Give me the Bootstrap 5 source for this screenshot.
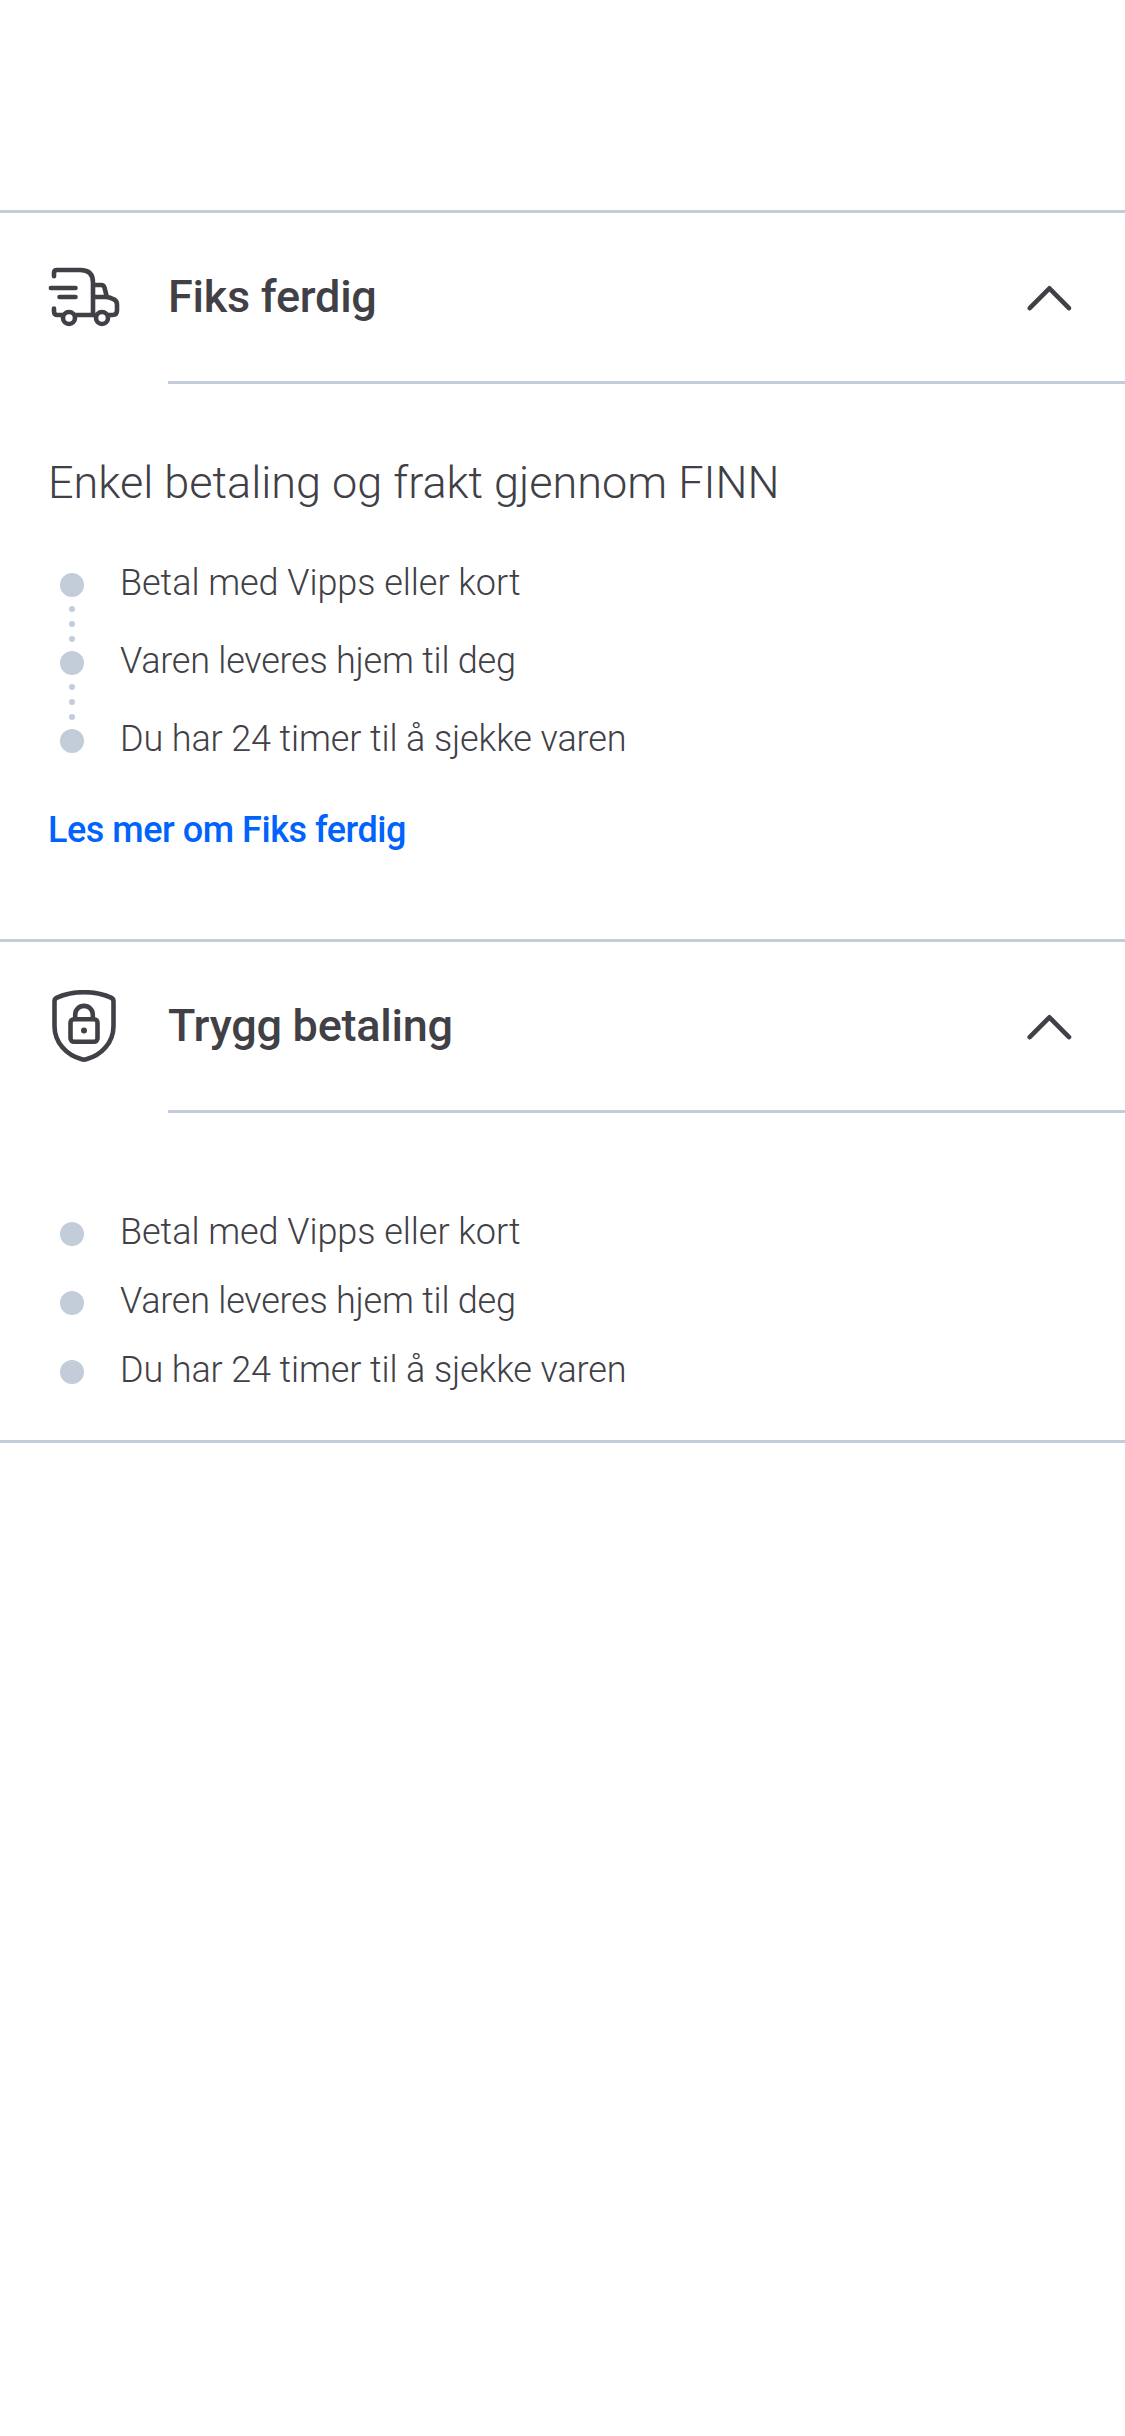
<!DOCTYPE html>
<html lang="nb">
<head>
<meta charset="utf-8">
<meta name="viewport" content="width=device-width, initial-scale=1">
<title>Fiks ferdig</title>
<link href="https://cdn.jsdelivr.net/npm/bootstrap@5.3.0/dist/css/bootstrap.min.css" rel="stylesheet">
<style>
  :root { --ink: #404046; --rule: #c3ccd9; --action: #0063fb; }
  body { font-family: Roboto, "Liberation Sans", sans-serif; font-weight: 300; color: var(--ink); padding-top: 210px; }
  .panels { border-top: 3px solid var(--rule); }
  .panel { border-bottom: 3px solid var(--rule); }
  .panel-head { height: 168px; padding: 0 52px 0 48px; color: var(--ink); text-align: left; }
  .panel-icon { width: 72px; height: 72px; margin-right: 48px; }
  .panel-title { font-size: 45px; font-weight: 500; line-height: 54px; letter-spacing: -.25px; }
  .panel-rule { height: 3px; margin-left: 168px; background: var(--rule); }
  .panel-icon, .chevron { fill: none; stroke: var(--ink); stroke-width: 4.6; stroke-linecap: round; stroke-linejoin: round; }
  .body-steps { padding: 72px 48px 88px; }
  .body-bullets { padding: 109px 48px 56px; }
  .intro { font-size: 45px; font-weight: 300; line-height: 54px; margin-bottom: 63px; }
  .steps { font-size: 36px; line-height: 20px; letter-spacing: -.12px; }
  .steps li { height: 69px; padding-left: 12px; gap: 36px; }
  .steps.linked li { height: 78px; }
  .steps li:last-child { height: 24px; }
  .steps li:first-child { letter-spacing: -.05px; }
  .steps li:nth-child(2) { letter-spacing: -.23px; }
  .bullet { width: 24px; fill: var(--rule); }
  .more { font-size: 36px; font-weight: 500; line-height: 42px; letter-spacing: -.47px; color: var(--action); margin-top: 56px; }
</style>
</head>
<body>
<main class="panels">
  <section class="panel">
    <button type="button" class="panel-head w-100 d-flex align-items-center bg-transparent border-0" aria-expanded="true">
      <svg class="panel-icon flex-shrink-0" viewBox="0 0 72 72" aria-hidden="true">
        <path d="M6 15.2V12q0-3 3-3h23.500q12.500 0 12.500 12.500V54M2.900 27H27.500M11.500 36H27.500M6 47.500V50.500q0 3.500 3.500 3.500H14.500M27.500 54H47.500M45 24h8q2.800 0 3.500 2.700l2.300 9M45 36h12.500q4 0 8 2.200 3.500 1.600 3.500 5.300v6q0 4.500-4.500 4.500H60.500"/>
        <circle cx="21" cy="57" r="6"/>
        <circle cx="54" cy="57" r="6"/>
      </svg>
      <span class="panel-title flex-grow-1">Fiks ferdig</span>
      <svg class="chevron" width="48" height="48" viewBox="0 0 48 48" aria-hidden="true"><path d="M4.700 35.200 24.400 15.300 44 35.200"/></svg>
    </button>
    <div class="panel-rule"></div>
    <div class="body-steps">
      <h2 class="intro">Enkel betaling og frakt gjennom FINN</h2>
      <ul class="steps linked list-unstyled mb-0">
        <li class="d-flex align-items-start">
          <svg class="bullet" height="78" viewBox="0 0 24 78" aria-hidden="true"><circle cx="12" cy="12" r="12"/><circle cx="12" cy="36" r="3"/><circle cx="12" cy="51" r="3"/><circle cx="12" cy="66" r="3"/></svg>
          <span>Betal med Vipps eller kort</span>
        </li>
        <li class="d-flex align-items-start">
          <svg class="bullet" height="78" viewBox="0 0 24 78" aria-hidden="true"><circle cx="12" cy="12" r="12"/><circle cx="12" cy="36" r="3"/><circle cx="12" cy="51" r="3"/><circle cx="12" cy="66" r="3"/></svg>
          <span>Varen leveres hjem til deg</span>
        </li>
        <li class="d-flex align-items-start">
          <svg class="bullet" height="24" viewBox="0 0 24 24" aria-hidden="true"><circle cx="12" cy="12" r="12"/></svg>
          <span>Du har 24 timer til å sjekke varen</span>
        </li>
      </ul>
      <a href="#" class="more d-block text-decoration-none">Les mer om Fiks ferdig</a>
    </div>
  </section>
  <section class="panel">
    <button type="button" class="panel-head w-100 d-flex align-items-center bg-transparent border-0" aria-expanded="true">
      <svg class="panel-icon flex-shrink-0" viewBox="0 0 72 72" aria-hidden="true">
        <path d="M36 2.200C46 2.200 55 4 63 7.600Q65.500 8.700 65.500 11.200V36C65.500 53 53 65.500 38.200 69.300Q36 70 33.800 69.300C19 65.500 6.500 53 6.500 36V11.200Q6.500 8.700 9 7.600C17 4 26 2.200 36 2.200Z"/>
        <rect x="22.500" y="29.200" width="27" height="22.600" rx="3.500"/>
        <path d="M27.200 29V24.700a8.800 8.800 0 0 1 17.600 0V29"/>
        <circle cx="36" cy="40.400" r="3" fill="#404046" stroke="none"/>
      </svg>
      <span class="panel-title flex-grow-1">Trygg betaling</span>
      <svg class="chevron" width="48" height="48" viewBox="0 0 48 48" aria-hidden="true"><path d="M4.700 35.200 24.400 15.300 44 35.200"/></svg>
    </button>
    <div class="panel-rule"></div>
    <div class="body-bullets">
      <ul class="steps list-unstyled mb-0">
        <li class="d-flex align-items-start">
          <svg class="bullet" height="24" viewBox="0 0 24 24" aria-hidden="true"><circle cx="12" cy="12" r="12"/></svg>
          <span>Betal med Vipps eller kort</span>
        </li>
        <li class="d-flex align-items-start">
          <svg class="bullet" height="24" viewBox="0 0 24 24" aria-hidden="true"><circle cx="12" cy="12" r="12"/></svg>
          <span>Varen leveres hjem til deg</span>
        </li>
        <li class="d-flex align-items-start">
          <svg class="bullet" height="24" viewBox="0 0 24 24" aria-hidden="true"><circle cx="12" cy="12" r="12"/></svg>
          <span>Du har 24 timer til å sjekke varen</span>
        </li>
      </ul>
    </div>
  </section>
</main>
<script src="https://cdn.jsdelivr.net/npm/bootstrap@5.3.0/dist/js/bootstrap.bundle.min.js"></script>
</body>
</html>
